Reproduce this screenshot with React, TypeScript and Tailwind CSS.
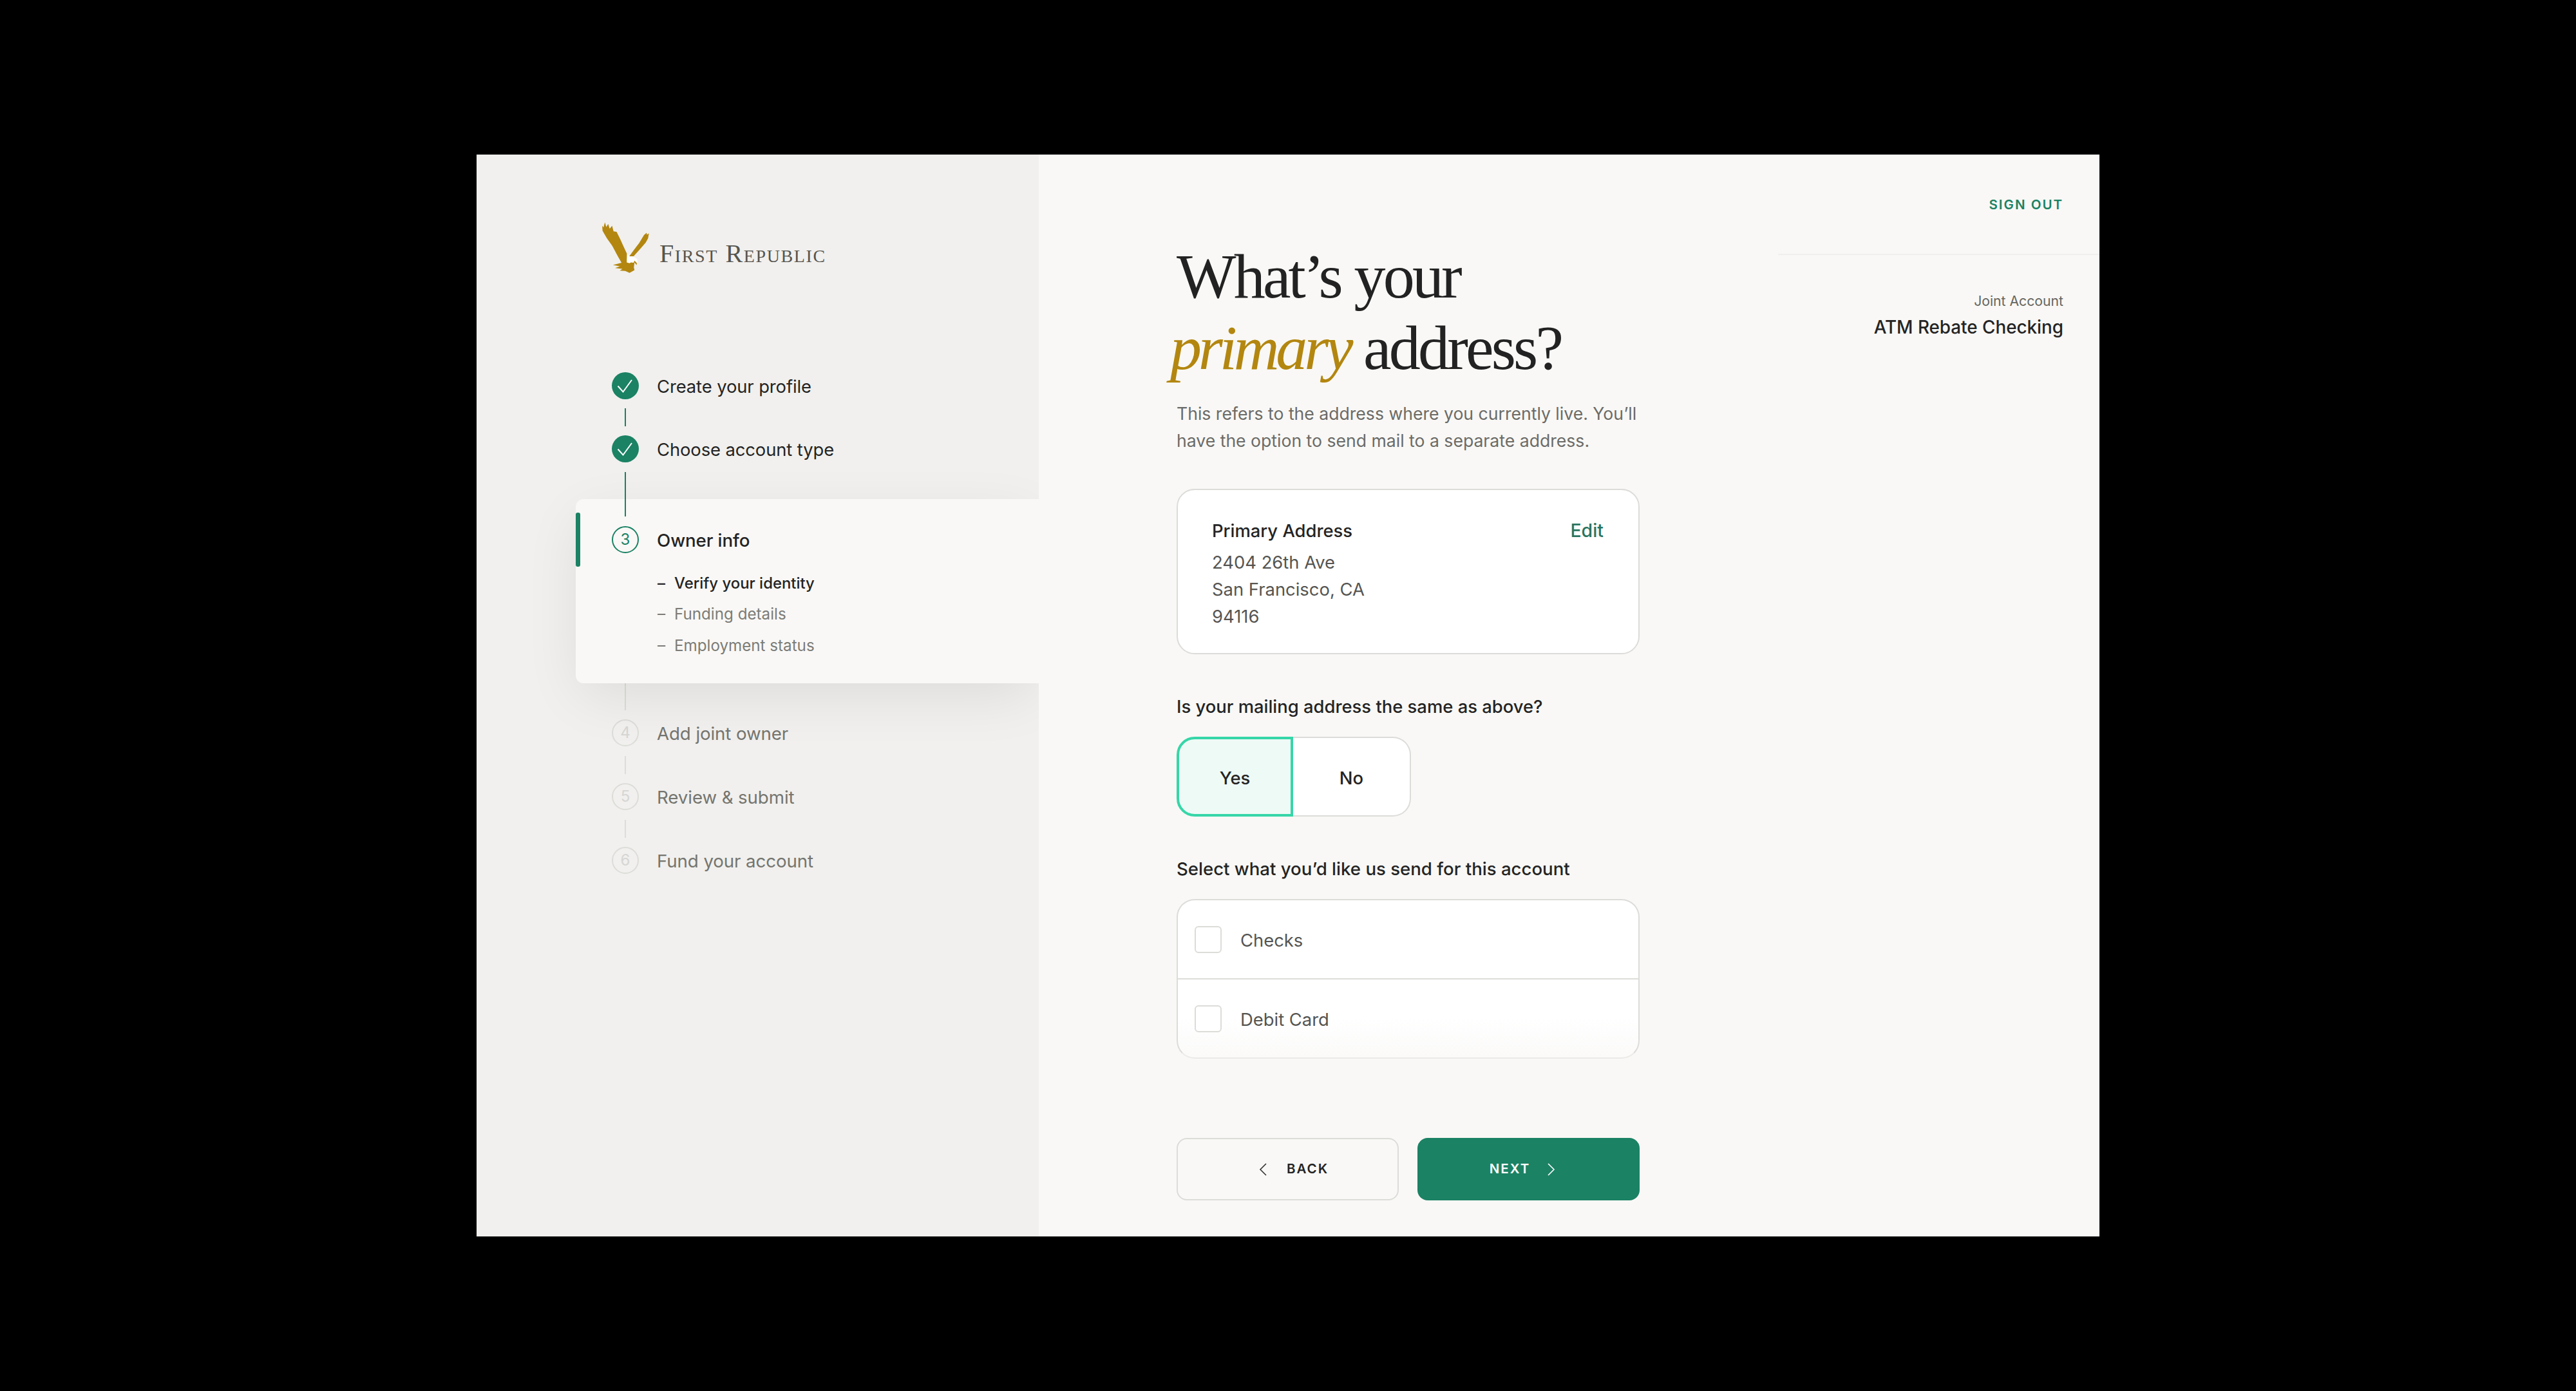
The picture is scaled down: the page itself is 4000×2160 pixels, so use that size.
import React from "react";

const Check = () => (
  <svg viewBox="0 0 42 42" className="w-[42px] h-[42px]">
    <circle cx="21" cy="21" r="21" fill="#1b8264" />
    <path d="M9.5 21.5 L17.5 30.5 L31 12" fill="none" stroke="#fff" strokeWidth="2" />
  </svg>
);

const Eagle = () => (
  <svg viewBox="78 76 218 235" className="w-[73px] h-[79px] shrink-0">
    <path
      fill="#b3860f"
      d="M78 92 L84 100 L91 76 L97 98 L106 84 L113 106 L124 92 L131 118 L145 120 L160 150 L178 190 L195 226 L205 232 L225 205 L250 172 L272 135 L284 125 L286 134 L295 127 L291 150 L280 170 L250 205 L225 232 L240 250 L238 275 L228 262 L225 285 L228 298 L205 311 L185 302 L160 300 L172 292 L138 288 L160 280 L128 274 L168 264 L150 232 L125 185 L100 150 L80 116 Z"
    />
    <path fill="#ffffff" d="M193 222 L206 234 L226 234 L243 250 L240 266 L228 254 L224 264 L212 262 L205 266 L192 262 Z" />
  </svg>
);

const Row = ({ icon, text, dim, strong }: { icon: React.ReactNode; text: string; dim?: boolean; strong?: boolean }) => (
  <div className="flex items-center h-[42px] gap-[28px]">
    {icon}
    <span
      className={`pt-[4px] tracking-[-0.1px] ${
        dim ? "text-[27.7px] text-[#75756f]" : strong ? "text-[27.7px] font-medium text-[#242424]" : "text-[27.4px] text-[#242424]"
      }`}
    >
      {text}
    </span>
  </div>
);

const Num = ({ n }: { n: number }) => (
  <div className="w-[42px] h-[42px] rounded-full border-[2px] border-[#dcdcd9] flex items-center justify-center text-[24px] text-[#d6d6d3]">
    {n}
  </div>
);

const Sub = ({ text, active }: { text: string; active?: boolean }) => (
  <div className={`flex items-center h-[49px] ${active ? "text-[23.9px] text-[#242424] font-medium" : "text-[24.2px] text-[#7c7c77]"}`}>
    <span className="w-[26px]">–</span>
    <span>{text}</span>
  </div>
);

export default function App() {
  return (
    <div className="w-[4000px] h-[2160px] bg-black pt-[240px] pl-[740px] [font-family:Inter,sans-serif] overflow-hidden">
      <div className="w-[2520px] h-[1680px] flex overflow-hidden">
        {/* Sidebar */}
        <aside className="w-[873px] shrink-0 bg-[#f1f0ee]">
          <div className="pt-[105px] pl-[195px] flex items-start gap-[16px]">
            <Eagle />
            <div className="mt-[27px] [font-family:'Liberation_Serif',serif] text-[#55554f] text-[40px] leading-[44px] [font-variant:small-caps] tracking-[1.6px] whitespace-nowrap">
              First Republic
            </div>
          </div>

          <nav className="mt-[154px] ml-[154px]">
            <div className="pl-[56px]">
              <Row icon={<Check />} text="Create your profile" />
              <div className="w-[2px] h-[28px] my-[14px] ml-[20px] bg-[#1b8264]" />
              <Row icon={<Check />} text="Choose account type" />
              <div className="w-[2px] h-[42px] mt-[15px] ml-[20px] bg-[#1b8264]" />
            </div>

            <div className="relative h-[286px] pl-[56px] bg-[#f9f8f6] rounded-l-[12px] shadow-[0_24px_90px_-8px_rgba(0,0,0,0.09)]">
              <div className="absolute left-0 top-[21px] w-[7px] h-[84px] rounded-r-[3px] rounded-l-[3px] bg-[#1b8264]" />
              <div className="w-[2px] h-[27px] ml-[20px] bg-[#1b8264]" />
              <div className="mt-[15px]">
                <Row
                  icon={
                    <div className="w-[42px] h-[42px] rounded-full border-[2px] border-[#1b8264] flex items-center justify-center text-[24px] text-[#1b8264]">
                      3
                    </div>
                  }
                  text="Owner info"
                  strong
                />
              </div>
              <div className="mt-[22px] ml-[71px]">
                <Sub text="Verify your identity" active />
                <Sub text="Funding details" />
                <Sub text="Employment status" />
              </div>
            </div>

            <div className="pl-[56px]">
              <div className="w-[2px] h-[42px] mb-[14px] ml-[20px] bg-[#dcdcd9]" />
              <Row icon={<Num n={4} />} text="Add joint owner" dim />
              <div className="w-[2px] h-[28px] mt-[15px] mb-[14px] ml-[20px] bg-[#dcdcd9]" />
              <Row icon={<Num n={5} />} text="Review & submit" dim />
              <div className="w-[2px] h-[28px] mt-[15px] mb-[14px] ml-[20px] bg-[#dcdcd9]" />
              <Row icon={<Num n={6} />} text="Fund your account" dim />
            </div>
          </nav>
        </aside>

        {/* Main */}
        <main className="relative flex-1 bg-[#f9f8f6] flex">
          <div className="pl-[214px] w-[1148px] shrink-0">
            <h1 className="pt-[134px] [font-family:'Liberation_Serif',serif] font-normal text-[98px] leading-[111px] tracking-[-3.8px] text-[#222222] whitespace-nowrap">
              What’s your
              <br />
              <em className="text-[#b3860f] -ml-[10px] tracking-[-5.2px]">primary</em> address?
            </h1>
            <p className="mt-[25px] text-[26.6px] leading-[42px] text-[#6b6b67] whitespace-nowrap">
              This refers to the address where you currently live. You’ll
              <br />
              have the option to send mail to a separate address.
            </p>

            <div className="mt-[54px] w-[719px] h-[257px] bg-white border-[2px] border-[#dcdcd9] rounded-[28px] pt-[42px] pl-[53px] pr-[54px] text-[27.4px] leading-[42px]">
              <div className="flex justify-between">
                <span className="font-medium text-[#242424]">Primary Address</span>
                <span className="font-medium text-[#2a7560] text-[28.4px]">Edit</span>
              </div>
              <div className="mt-[7px] text-[#555552]">
                <div>2404 26th Ave</div>
                <div>San Francisco, CA</div>
                <div>94116</div>
              </div>
            </div>

            <div className="mt-[60px] text-[27.4px] leading-[42px] font-medium text-[#242424]">
              Is your mailing address the same as above?
            </div>
            <div className="mt-[26px] flex h-[124px] w-[364px] text-[27.4px] font-medium text-[#242424]">
              <div className="w-[181px] pt-[5px] bg-[#eefaf6] border-[4px] border-[#36d6a8] rounded-l-[28px] flex items-center justify-center">
                Yes
              </div>
              <div className="flex-1 pt-[5px] bg-white border-[2px] border-l-0 border-[#dcdcd9] rounded-r-[28px] flex items-center justify-center">
                No
              </div>
            </div>

            <div className="mt-[60px] text-[27.6px] leading-[42px] font-medium text-[#242424]">
              Select what you’d like us send for this account
            </div>
            <div className="mt-[26px] w-[719px] h-[248px] rounded-[28px] border-[2px] border-[#dcdcd9] border-b-[#eaeae7] bg-gradient-to-b from-white from-75% to-[#fbfaf9] text-[27.4px] text-[#555552]">
              <div className="h-[123px] flex items-center pl-[26px] gap-[29px] border-b-[2px] border-[#dcdcd9]">
                <span className="w-[42px] h-[42px] bg-white rounded-[6px] border-[2px] border-[#dcdcd9]" />
                <span className="pt-[4px]">Checks</span>
              </div>
              <div className="h-[121px] flex items-center pl-[26px] gap-[29px]">
                <span className="w-[42px] h-[42px] bg-white rounded-[6px] border-[2px] border-[#dcdcd9]" />
                <span className="pt-[4px]">Debit Card</span>
              </div>
            </div>

            <div className="mt-[123px] w-[719px] flex justify-between text-[20.5px] font-semibold tracking-[2px]">
              <button className="w-[345px] h-[97px] pl-[18px] rounded-[16px] border-[2px] border-[#dcdcd9] text-[#242424] flex items-center justify-center gap-[28px]">
                <svg viewBox="0 0 16 24" className="w-[16px] h-[24px]">
                  <path d="M12 3 L3 12 L12 21" fill="none" stroke="#333" strokeWidth="1.6" />
                </svg>
                BACK
              </button>
              <button className="w-[345px] h-[97px] pr-[18px] rounded-[16px] bg-[#1b8264] text-white flex items-center justify-center gap-[24px]">
                NEXT
                <svg viewBox="0 0 16 24" className="w-[16px] h-[24px]">
                  <path d="M4 3 L13 12 L4 21" fill="none" stroke="#fff" strokeWidth="1.6" />
                </svg>
              </button>
            </div>
          </div>

          <div className="flex-1">
            <div className="h-[156px] border-b-[2px] border-[#f0efed] pt-[63px] pr-[56px] text-right text-[20.5px] leading-[30px] font-semibold tracking-[2px] text-[#1b8264] whitespace-nowrap">
              SIGN OUT
            </div>
            <div className="pr-[56px] text-right mt-[56px] whitespace-nowrap">
              <div className="text-[21.2px] leading-[30px] text-[#66665f]">Joint Account</div>
              <div className="mt-[4px] text-[27.8px] leading-[44px] font-medium text-[#242424]">ATM Rebate Checking</div>
            </div>
          </div>
        </main>
      </div>
    </div>
  );
}
